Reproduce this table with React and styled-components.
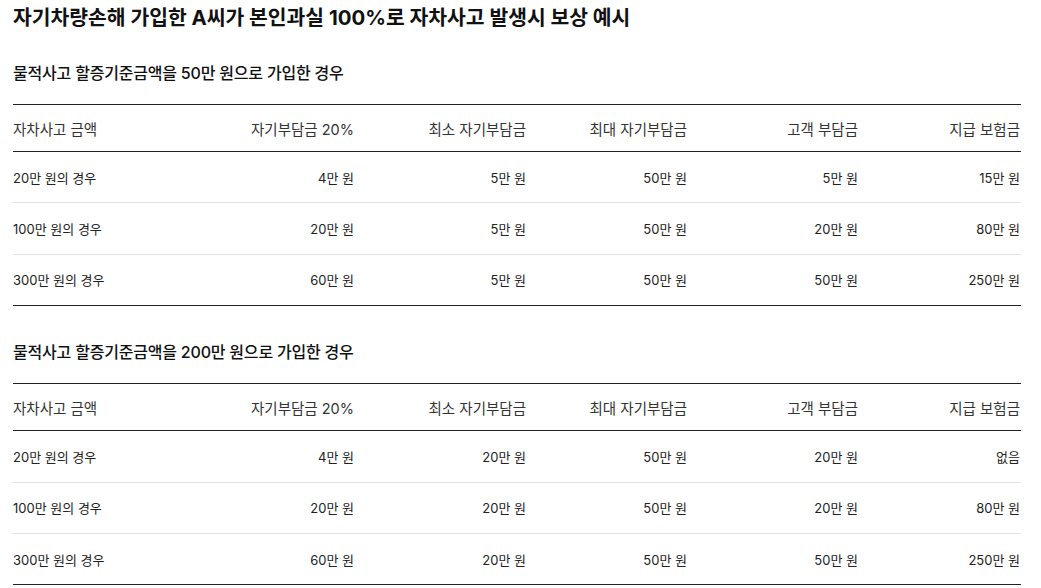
import React from 'react';
import styled, { createGlobalStyle } from 'styled-components';

const GlobalStyle = createGlobalStyle`
  body {
    margin: 0;
    background: #fff;
    font-family: Inter, "Noto Sans CJK KR", sans-serif;
    color: #222;
  }
`;

const Page = styled.div`
  width: 1008px;
  padding: 4px 13px 0 13px;
`;

const Title = styled.h2`
  margin: 0;
  font-size: 20.4px;
  font-weight: 700;
  line-height: 28px;
  color: #111;
`;

const Section = styled.section`
  margin-top: ${props => props.first ? '29px' : '34px'};
`;

const SubTitle = styled.h3`
  margin: 0 0 19px 0;
  font-size: 16px;
  font-weight: 500;
  line-height: 24px;
  color: #111;
  letter-spacing: -0.2px;
`;

const Table = styled.div`
  border-top: 1px solid #222;
  border-bottom: 1px solid #222;
`;

const Row = styled.div`
  display: grid;
  grid-template-columns: 171px 171px 172px 161px 171px 162px;
  align-items: center;
  height: ${props => props.head ? '46px' : '50.4px'};
  border-bottom: 1px solid ${props => props.head ? '#222' : '#e2e2e2'};
  &:last-child {
    border-bottom: none;
  }
`;

const Cell = styled.div`
  font-size: ${props => props.head ? '14.5px' : '13px'};
  color: ${props => props.head ? '#333' : '#222'};
  text-align: ${props => props.left ? 'left' : 'right'};
  white-space: nowrap;
  padding-right: ${props => props.left ? '0' : '1px'};
`;

const headers = ['자차사고 금액', '자기부담금 20%', '최소 자기부담금', '최대 자기부담금', '고객 부담금', '지급 보험금'];

const tables = [
  {
    title: '물적사고 할증기준금액을 50만 원으로 가입한 경우',
    rows: [
      ['20만 원의 경우', '4만 원', '5만 원', '50만 원', '5만 원', '15만 원'],
      ['100만 원의 경우', '20만 원', '5만 원', '50만 원', '20만 원', '80만 원'],
      ['300만 원의 경우', '60만 원', '5만 원', '50만 원', '50만 원', '250만 원'],
    ],
  },
  {
    title: '물적사고 할증기준금액을 200만 원으로 가입한 경우',
    rows: [
      ['20만 원의 경우', '4만 원', '20만 원', '50만 원', '20만 원', '없음'],
      ['100만 원의 경우', '20만 원', '20만 원', '50만 원', '20만 원', '80만 원'],
      ['300만 원의 경우', '60만 원', '20만 원', '50만 원', '50만 원', '250만 원'],
    ],
  },
];

const App = () => {
  return (
    <>
      <GlobalStyle />
      <Page>
        <Title>자기차량손해 가입한 A씨가 본인과실 100%로 자차사고 발생시 보상 예시</Title>
        {tables.map((t, ti) => (
          <Section key={ti} first={ti === 0}>
            <SubTitle>{t.title}</SubTitle>
            <Table>
              <Row head>
                {headers.map((h, i) => (
                  <Cell key={i} head left={i === 0}>{h}</Cell>
                ))}
              </Row>
              {t.rows.map((r, ri) => (
                <Row key={ri}>
                  {r.map((c, ci) => (
                    <Cell key={ci} left={ci === 0}>{c}</Cell>
                  ))}
                </Row>
              ))}
            </Table>
          </Section>
        ))}
      </Page>
    </>
  );
};

export default App;
